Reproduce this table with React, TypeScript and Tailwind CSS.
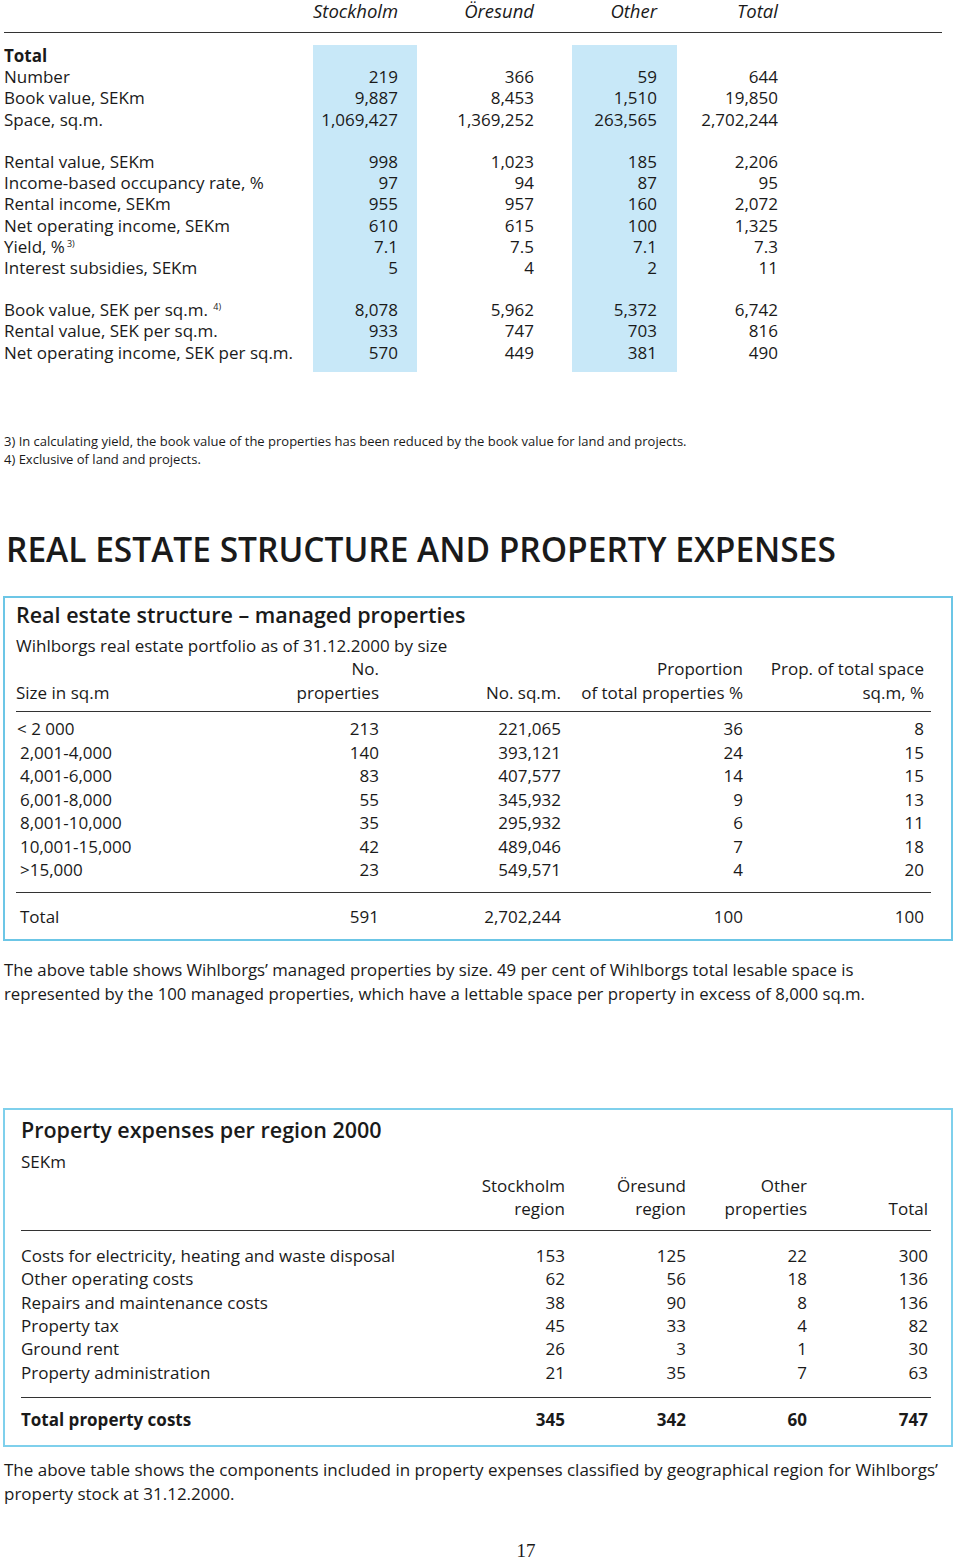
import React from 'react';

const topRows: (string[] | null)[] = [
  ['Total', '', '', '', ''],
  ['Number', '219', '366', '59', '644'],
  ['Book value, SEKm', '9,887', '8,453', '1,510', '19,850'],
  ['Space, sq.m.', '1,069,427', '1,369,252', '263,565', '2,702,244'],
  null,
  ['Rental value, SEKm', '998', '1,023', '185', '2,206'],
  ['Income-based occupancy rate, %', '97', '94', '87', '95'],
  ['Rental income, SEKm', '955', '957', '160', '2,072'],
  ['Net operating income, SEKm', '610', '615', '100', '1,325'],
  ['Yield, %', '7.1', '7.5', '7.1', '7.3'],
  ['Interest subsidies, SEKm', '5', '4', '2', '11'],
  null,
  ['Book value, SEK per sq.m.', '8,078', '5,962', '5,372', '6,742'],
  ['Rental value, SEK per sq.m.', '933', '747', '703', '816'],
  ['Net operating income, SEK per sq.m.', '570', '449', '381', '490'],
];

const sizeRows = [
  ['< 2 000', '213', '221,065', '36', '8'],
  ['2,001-4,000', '140', '393,121', '24', '15'],
  ['4,001-6,000', '83', '407,577', '14', '15'],
  ['6,001-8,000', '55', '345,932', '9', '13'],
  ['8,001-10,000', '35', '295,932', '6', '11'],
  ['10,001-15,000', '42', '489,046', '7', '18'],
  ['>15,000', '23', '549,571', '4', '20'],
];

const costRows = [
  ['Costs for electricity, heating and waste disposal', '153', '125', '22', '300'],
  ['Other operating costs', '62', '56', '18', '136'],
  ['Repairs and maintenance costs', '38', '90', '8', '136'],
  ['Property tax', '45', '33', '4', '82'],
  ['Ground rent', '26', '3', '1', '30'],
  ['Property administration', '21', '35', '7', '63'],
];

function labelFor(r: string[], i: number) {
  if (i === 0) return <span className="font-bold">Total</span>;
  if (r[0] === 'Yield, %') {
    return (
      <span>
        Yield, %<span className="text-[9px] ml-[2px] align-[6px] leading-none">3)</span>
      </span>
    );
  }
  if (r[0] === 'Book value, SEK per sq.m.') {
    return (
      <span>
        Book value, SEK per sq.m. <span className="text-[9px] ml-[1px] align-[6px] leading-none">4)</span>
      </span>
    );
  }
  return r[0];
}

function ValueCol({ idx, width, pr, band }: { idx: number; width: string; pr: string; band?: boolean }) {
  return (
    <div className={`${width} ${pr} ${band ? 'bg-[#c8e8f8]' : ''} pb-[9px] flex flex-col items-end`}>
      {topRows.map((r, i) => (
        <div key={i} className="h-[21.2px] leading-[21.2px]">
          {r ? r[idx] : ''}
        </div>
      ))}
    </div>
  );
}

export default function App() {
  return (
    <div className="w-[960px] min-h-[1561px] bg-white text-[#1a1a1a] font-['Open_Sans',sans-serif] text-[17px]">
      {/* summary table */}
      <div className="ml-1 w-[938px]">
        <div className="flex h-[33px] border-b-[1.5px] border-[#333] italic text-[18.5px] leading-[22px]">
          <div className="w-[309px]" />
          <div className="w-[104px] pr-[19px] text-right">Stockholm</div>
          <div className="w-[155px] pr-[38px] text-right">Öresund</div>
          <div className="w-[105px] pr-[20px] text-right">Other</div>
          <div className="w-[123px] pr-[22px] text-right">Total</div>
        </div>
        <div className="flex mt-[12px]">
          <div className="w-[309px] flex flex-col">
            {topRows.map((r, i) => (
              <div key={i} className="h-[21.2px] leading-[21.2px] whitespace-nowrap">
                {r ? labelFor(r, i) : ''}
              </div>
            ))}
          </div>
          <ValueCol idx={1} width="w-[104px]" pr="pr-[19px]" band />
          <ValueCol idx={2} width="w-[155px]" pr="pr-[38px]" />
          <ValueCol idx={3} width="w-[105px]" pr="pr-[20px]" band />
          <ValueCol idx={4} width="w-[123px]" pr="pr-[22px]" />
        </div>
      </div>

      {/* footnotes */}
      <div className="mt-[60px] ml-1 text-[13px] leading-[18px]">
        <p>3) In calculating yield, the book value of the properties has been reduced by the book value for land and projects.</p>
        <p>4) Exclusive of land and projects.</p>
      </div>

      <h1 className="mt-[63px] ml-[6px] text-[33.5px] leading-[36px] font-semibold">
        REAL ESTATE STRUCTURE AND PROPERTY EXPENSES
      </h1>

      {/* box 1 */}
      <div className="mt-[29px] ml-[3px] w-[950px] border-2 border-[#6cc6e6] pl-[11px] pr-[20px] pt-[3px] pb-[10px]">
        <h2 className="text-[21.5px] leading-[28px] font-semibold">Real estate structure – managed properties</h2>
        <p className="mt-[5px] leading-[23.5px]">Wihlborgs real estate portfolio as of 31.12.2000 by size</p>
        <div className="border-b-[1.5px] border-[#333] pb-[7px]">
          <div className="grid grid-cols-[236px_127px_182px_182px_181px] leading-[23.5px]">
            <div />
            <div className="text-right">No.</div>
            <div />
            <div className="text-right">Proportion</div>
            <div className="text-right">Prop. of total space</div>
            <div>Size in sq.m</div>
            <div className="text-right">properties</div>
            <div className="text-right">No. sq.m.</div>
            <div className="text-right">of total properties %</div>
            <div className="text-right">sq.m, %</div>
          </div>
        </div>
        <div className="border-b-[1.5px] border-[#333] pt-[5px] pb-[10px]">
          {sizeRows.map((r, i) => (
            <div key={i} className="grid grid-cols-[236px_127px_182px_182px_181px] leading-[23.5px]">
              <div className={i === 0 ? 'pl-[1px]' : 'pl-[4px]'}>{r[0]}</div>
              <div className="text-right">{r[1]}</div>
              <div className="text-right">{r[2]}</div>
              <div className="text-right">{r[3]}</div>
              <div className="text-right">{r[4]}</div>
            </div>
          ))}
        </div>
        <div className="grid grid-cols-[236px_127px_182px_182px_181px] leading-[24px] mt-[12px]">
          <div className="pl-[4px]">Total</div>
          <div className="text-right">591</div>
          <div className="text-right">2,702,244</div>
          <div className="text-right">100</div>
          <div className="text-right">100</div>
        </div>
      </div>

      <p className="mt-[17px] ml-1 leading-[24px] w-[940px] text-[16.8px]">
        The above table shows Wihlborgs’ managed properties by size. 49 per cent of Wihlborgs total lesable space is
        <br />
        represented by the 100 managed properties, which have a lettable space per property in excess of 8,000 sq.m.
      </p>

      {/* box 2 */}
      <div className="mt-[102px] ml-[3px] w-[950px] border-2 border-[#7fd0ec] pl-[16px] pr-[20px] pt-[6px] pb-[13px]">
        <h2 className="text-[21.5px] leading-[28px] font-semibold">Property expenses per region 2000</h2>
        <p className="mt-[6px] leading-[24px]">SEKm</p>
        <div className="border-b-[1.5px] border-[#333] pb-[9px]">
          <div className="grid grid-cols-[424px_120px_121px_121px_121px] leading-[23.5px]">
            <div />
            <div className="text-right">Stockholm</div>
            <div className="text-right">Öresund</div>
            <div className="text-right">Other</div>
            <div />
            <div />
            <div className="text-right">region</div>
            <div className="text-right">region</div>
            <div className="text-right">properties</div>
            <div className="text-right">Total</div>
          </div>
        </div>
        <div className="border-b-[1.5px] border-[#333] pt-[13px] pb-[13px]">
          {costRows.map((r, i) => (
            <div key={i} className="grid grid-cols-[424px_120px_121px_121px_121px] leading-[23.4px]">
              <div>{r[0]}</div>
              <div className="text-right">{r[1]}</div>
              <div className="text-right">{r[2]}</div>
              <div className="text-right">{r[3]}</div>
              <div className="text-right">{r[4]}</div>
            </div>
          ))}
        </div>
        <div className="grid grid-cols-[424px_120px_121px_121px_121px] leading-[24px] mt-[10px] font-bold">
          <div>Total property costs</div>
          <div className="text-right">345</div>
          <div className="text-right">342</div>
          <div className="text-right">60</div>
          <div className="text-right">747</div>
        </div>
      </div>

      <p className="mt-[11px] ml-1 leading-[24px] w-[950px]">
        The above table shows the components included in property expenses classified by geographical region for Wihlborgs’
        <br />
        property stock at 31.12.2000.
      </p>

      <div className="mt-[33px] pl-[92px] text-center font-['Liberation_Serif',serif] text-[19px] leading-[24px]">
        17
      </div>
    </div>
  );
}
